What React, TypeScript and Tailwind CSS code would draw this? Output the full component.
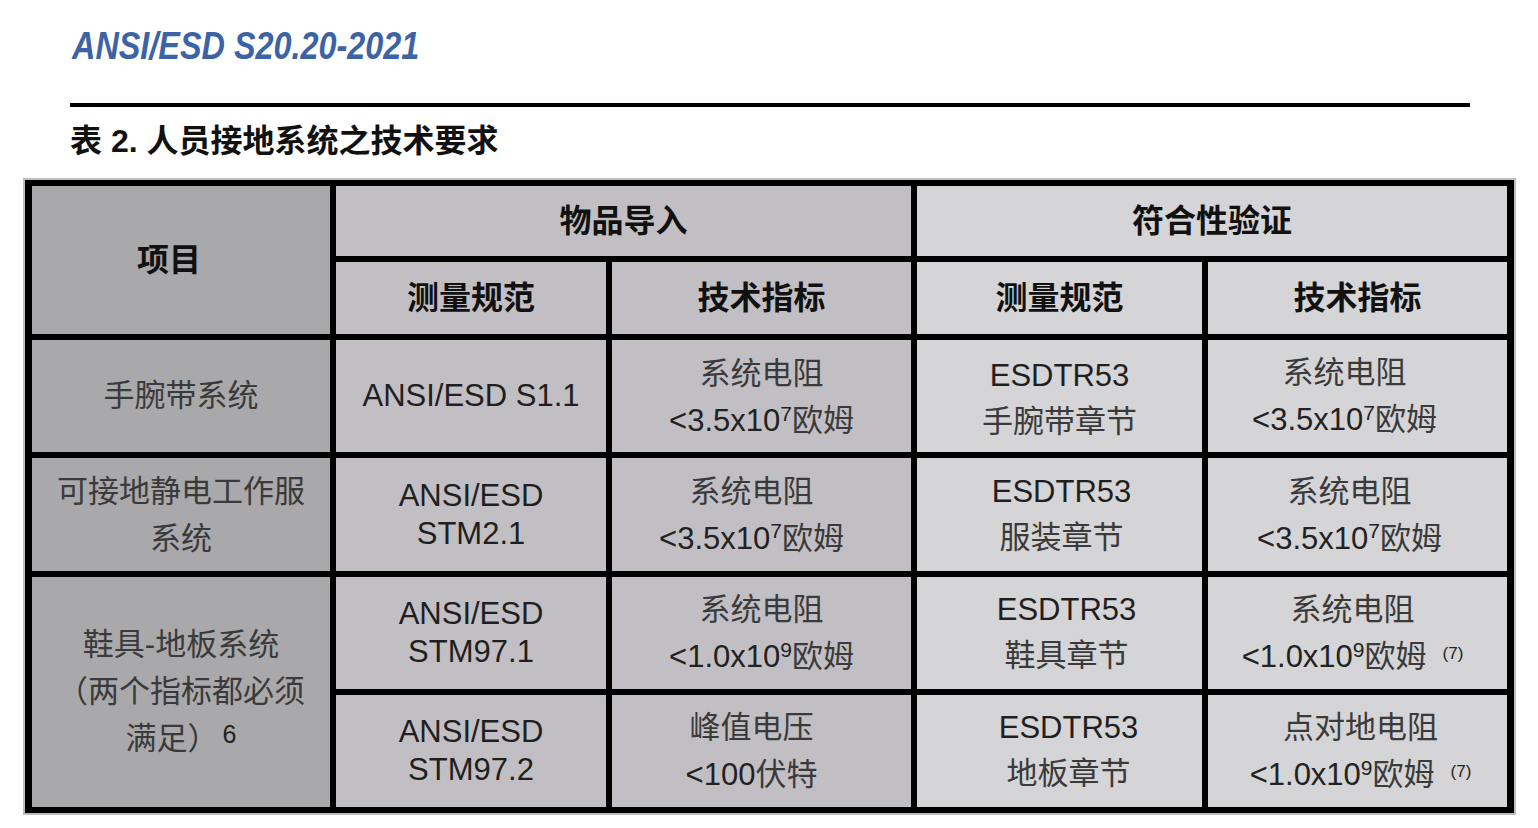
const fontStack = "font-['Liberation_Sans','Noto_Sans_CJK_SC',sans-serif]";

const leftBg = "bg-[#a9a8aa]";
const midBg = "bg-[#c2bfc4]";
const rightBg = "bg-[#d5d4d6]";

function Cell({
  children,
  className = "",
}: {
  children: React.ReactNode;
  className?: string;
}) {
  return (
    <div
      className={`flex flex-col items-center justify-center text-center ${className}`}
    >
      {children}
    </div>
  );
}

function Head({ children, className = "" }: { children: React.ReactNode; className?: string }) {
  return (
    <Cell className={`text-[32px] font-bold text-[#111] leading-none ${className}`}>
      {children}
    </Cell>
  );
}

// 两行：中文说明 + 数值
function Spec({
  label,
  value,
  power,
  note,
  className = "",
}: {
  label: string;
  value: string;
  power: string;
  note?: boolean;
  className?: string;
}) {
  return (
    <Cell className={`text-[31px] leading-[47px] text-[#3a3a3a] ${className}`}>
      <div>{label}</div>
      <div className="whitespace-nowrap">
        <span className="text-[#222]">
          {value}
          <sup className="text-[21px]">{power}</sup>
        </span>
        欧姆
        {note && <sup className="ml-[16px] text-[17px] text-[#222]">(7)</sup>}
      </div>
    </Cell>
  );
}

function Std({ top, bottom, className = "" }: { top: string; bottom: string; className?: string }) {
  return (
    <Cell className={`text-[31px] leading-[38px] text-[#1f1f1f] ${className}`}>
      <div>{top}</div>
      <div>{bottom}</div>
    </Cell>
  );
}

function Tr53({ chapter, className = "" }: { chapter: string; className?: string }) {
  return (
    <Cell className={`text-[31px] leading-[46px] ${className}`}>
      <div className="text-[#1f1f1f]">ESDTR53</div>
      <div className="text-[#3a3a3a]">{chapter}</div>
    </Cell>
  );
}

export default function App() {
  return (
    <div className={`min-h-screen w-[1538px] bg-white pt-[26px] pl-[25px] ${fontStack}`}>
      <div className="ml-[47px] h-[40px] origin-left scale-x-[0.83] whitespace-nowrap text-[39px] leading-[40px] font-bold italic text-[#3b63a6]">
        ANSI/ESD S20.20-2021
      </div>

      <div className="ml-[45px] mt-[37px] h-[4px] w-[1400px] bg-black" />

      <div className="ml-[45px] mt-[18px] h-[32px] text-[32px] leading-none font-bold text-[#111]">
        表 2. 人员接地系统之技术要求
      </div>

      <div className="mt-[23px] grid w-fit grid-cols-[298px_270px_299px_285px_299px] grid-rows-[70px_72px_112px_113px_112px_112px] gap-[6px] bg-black px-[7px] py-[6px] shadow-[0_0_0_2px_#bdbdbd]">
        {/* 表头 */}
        <Head className={`row-span-2 pr-[24px] ${leftBg}`}>项目</Head>
        <Head className={`col-span-2 ${midBg}`}>物品导入</Head>
        <Head className={`col-span-2 ${rightBg}`}>符合性验证</Head>
        <Head className={midBg}>测量规范</Head>
        <Head className={midBg}>技术指标</Head>
        <Head className={rightBg}>测量规范</Head>
        <Head className={rightBg}>技术指标</Head>

        {/* 手腕带系统 */}
        <Cell className={`text-[31px] text-[#3a3a3a] ${leftBg}`}>手腕带系统</Cell>
        <Cell className={`text-[31px] text-[#1f1f1f] ${midBg}`}>ANSI/ESD S1.1</Cell>
        <Spec label="系统电阻" value="<3.5x10" power="7" className={`pt-[2px] ${midBg}`} />
        <Tr53 chapter="手腕带章节" className={`pt-[6px] ${rightBg}`} />
        <Spec label="系统电阻" value="<3.5x10" power="7" className={`pr-[26px] ${rightBg}`} />

        {/* 工作服系统 */}
        <Cell className={`text-[31px] leading-[47px] text-[#3a3a3a] ${leftBg}`}>
          <div>可接地静电工作服</div>
          <div>系统</div>
        </Cell>
        <Std top="ANSI/ESD" bottom="STM2.1" className={midBg} />
        <Spec label="系统电阻" value="<3.5x10" power="7" className={`pr-[20px] ${midBg}`} />
        <Tr53 chapter="服装章节" className={`pl-[4px] ${rightBg}`} />
        <Spec label="系统电阻" value="<3.5x10" power="7" className={`pr-[16px] ${rightBg}`} />

        {/* 鞋具-地板系统 */}
        <Cell className={`row-span-2 text-[31px] leading-[47px] text-[#3a3a3a] ${leftBg}`}>
          <div>鞋具-地板系统</div>
          <div>（两个指标都必须</div>
          <div>
            满足）
            <span className="relative -top-[6px] ml-[4px] text-[25px] text-[#222]">6</span>
          </div>
        </Cell>
        <Std top="ANSI/ESD" bottom="STM97.1" className={midBg} />
        <Spec label="系统电阻" value="<1.0x10" power="9" className={midBg} />
        <Tr53 chapter="鞋具章节" className={`pl-[14px] ${rightBg}`} />
        <Spec label="系统电阻" value="<1.0x10" power="9" note className={`pr-[10px] ${rightBg}`} />

        <Std top="ANSI/ESD" bottom="STM97.2" className={midBg} />
        <Cell className={`pr-[20px] text-[31px] leading-[47px] text-[#3a3a3a] ${midBg}`}>
          <div>峰值电压</div>
          <div>
            <span className="text-[#222]">&lt;100</span>伏特
          </div>
        </Cell>
        <Tr53 chapter="地板章节" className={`pl-[18px] ${rightBg}`} />
        <Spec label="点对地电阻" value="<1.0x10" power="9" note className={`pl-[6px] ${rightBg}`} />
      </div>
    </div>
  );
}
